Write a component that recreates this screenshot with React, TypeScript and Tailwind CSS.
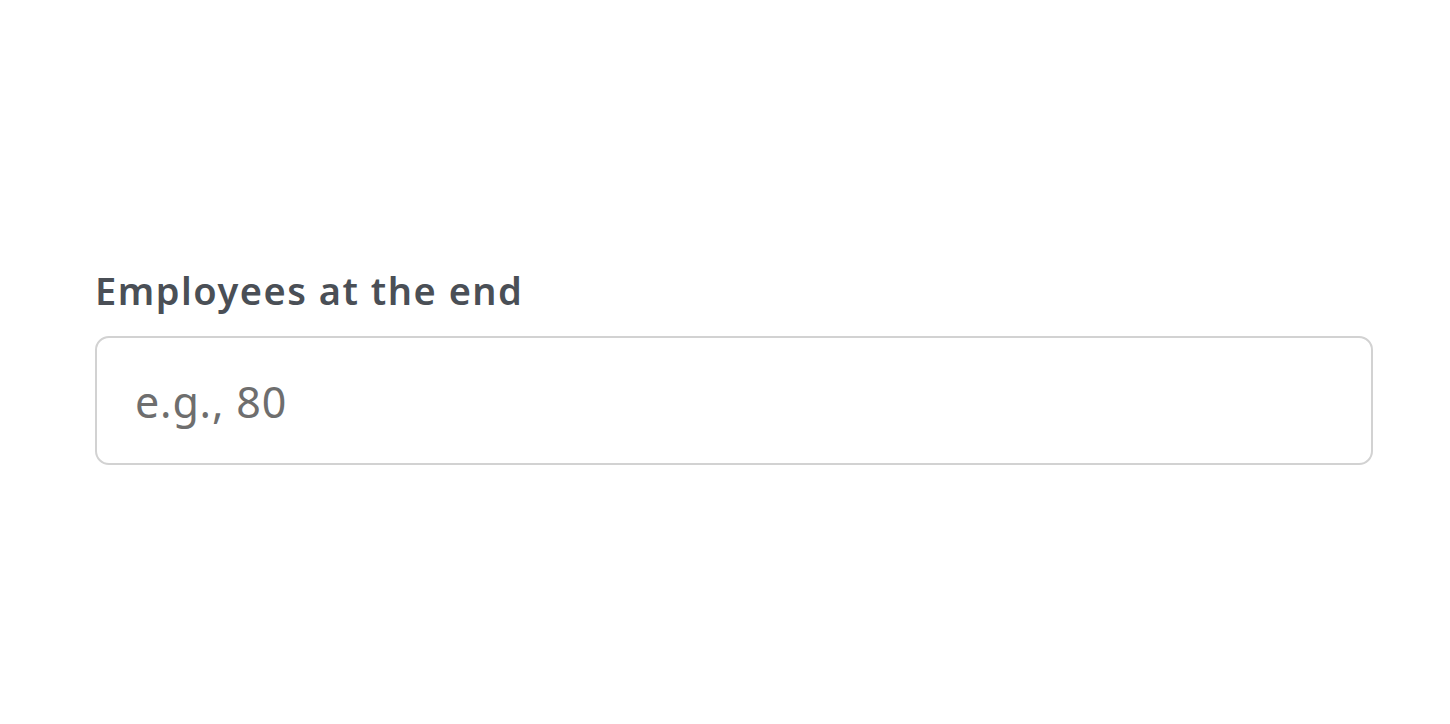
import React from "react";

export default function App() {
  return (
    <div className="w-[1450px] h-[724px] bg-white pt-[265px] pl-[95px] pr-[77px]" style={{ fontFamily: '"Noto Sans", "Open Sans", sans-serif' }}>
      <label className="block text-[38px] leading-[50px] font-semibold text-[#4a4f56] tracking-[1.5px]">Employees at the end</label>
      <div className="mt-[21px] h-[129px] w-[1278px] rounded-[14px] border-2 border-[#d2d2d2] flex items-center pl-[38px] pt-[4px]">
        <input
          className="w-full outline-none bg-transparent text-[43px] tracking-[0.8px] text-[#333] placeholder:text-[#6e6e6e]"
          placeholder="e.g., 80"
          style={{ fontFamily: '"Noto Sans", "Open Sans", sans-serif' }}
        />
      </div>
    </div>
  );
}
